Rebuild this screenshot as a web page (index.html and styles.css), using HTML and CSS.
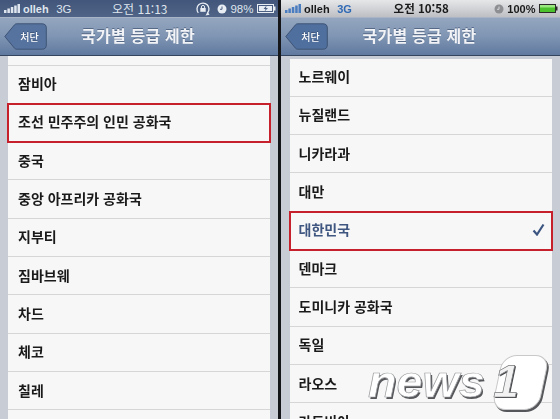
FILE: index.html
```html
<!DOCTYPE html>
<html lang="ko">
<head>
<meta charset="utf-8">
<title>국가별 등급 제한</title>
<link rel="stylesheet" href="styles.css">
</head>
<body>
<div class="screen">
  <section class="phone phone-left">
    <header class="status status-dark">
      <div class="status-side">
        <svg class="bars" width="16" height="9" viewBox="0 0 16 9"><rect x="0" y="6" width="2.500" height="3"/><rect x="3.400" y="4.500" width="2.500" height="4.500"/><rect x="6.800" y="3" width="2.500" height="6"/><rect x="10.200" y="1.500" width="2.500" height="7.500"/><rect x="13.500" y="0" width="2.500" height="9"/></svg>
        <span class="carrier">olleh</span><span class="net">3G</span>
      </div>
      <div class="clock">오전 11:13</div>
      <div class="status-side status-end">
        <svg class="rotation" width="16" height="14" viewBox="0 0 16 14"><path d="M3.300 10.800a6 6 0 1 1 9.200.2" fill="none" stroke="#e8edf4" stroke-width="1.300"/><path d="M10.500 13.500l4-.8-1.800-3z" fill="#e8edf4"/><rect x="5.300" y="6" width="5.400" height="3.800" fill="#e8edf4"/><path d="M6.400 6v-1a1.600 1.600 0 0 1 3.200 0v1" fill="none" stroke="#e8edf4"/></svg>
        <svg class="alarm" width="10" height="10" viewBox="0 0 10 10"><circle cx="5" cy="5" r="4.500" fill="#e8edf4"/><path d="M5 2.500v2.800h-2" fill="none" stroke="#4d6282"/></svg>
        <span class="pct">98%</span>
        <svg width="19" height="9" viewBox="0 0 19 9"><rect x=".5" y=".5" width="16" height="8" fill="none" stroke="#e8edf4"/><rect x="17" y="2.500" width="1.500" height="4" fill="#e8edf4"/><rect x="2" y="2" width="13" height="5" fill="#e8edf4"/><path d="M9.500 1.500l-3 3.500h2l-1 2.500 3.500-3.500h-2z" fill="#4d6282"/></svg>
      </div>
    </header>
    <nav class="nav">
      <div class="back">
        <svg class="back-shape" width="43" height="27" viewBox="0 0 43 27"><path d="M.8 13.500 10.500 1.800Q11.300.8 12.800.8H38Q42.300.8 42.300 5V22Q42.300 26.200 38 26.200H12.800Q11.300 26.200 10.500 25.200Z" fill="#56739f" stroke="#3f5475"/></svg>
        <span class="back-label">처단</span>
      </div>
      <h1 class="title">국가별 등급 제한</h1>
    </nav>
    <div class="list list-left">
      <ul class="card">
        <li class="row row-stub"></li>
        <li class="row">잠비아</li>
        <li class="row mark">조선 민주주의 인민 공화국</li>
        <li class="row">중국</li>
        <li class="row">중앙 아프리카 공화국</li>
        <li class="row">지부티</li>
        <li class="row">짐바브웨</li>
        <li class="row">차드</li>
        <li class="row">체코</li>
        <li class="row">칠레</li>
        <li class="row"></li>
      </ul>
    </div>
  </section>
  <section class="phone phone-right">
    <header class="status status-light">
      <div class="status-side">
        <svg class="bars" width="16" height="9" viewBox="0 0 16 9"><rect x="0" y="6" width="2.500" height="3"/><rect x="3.400" y="4.500" width="2.500" height="4.500"/><rect x="6.800" y="3" width="2.500" height="6"/><rect x="10.200" y="1.500" width="2.500" height="7.500"/><rect x="13.500" y="0" width="2.500" height="9"/></svg>
        <span class="carrier">olleh</span><span class="net net-blue">3G</span>
      </div>
      <div class="clock">오전 10:58</div>
      <div class="status-side status-end">
        <svg class="alarm" width="10" height="10" viewBox="0 0 10 10"><circle cx="5" cy="5" r="4.500" fill="#8d8f93"/><path d="M5 2.500v2.800h-2" fill="none" stroke="#d5d7da"/></svg>
        <span class="pct">100%</span>
        <svg width="19" height="9" viewBox="0 0 19 9"><rect x=".5" y=".5" width="16" height="8" fill="#4cc22e" stroke="#2b2b2b"/><rect x="17" y="2.500" width="1.500" height="4" fill="#2b2b2b"/><rect x="1" y="1" width="15" height="2.500" fill="#9ae87f"/></svg>
      </div>
    </header>
    <nav class="nav">
      <div class="back">
        <svg class="back-shape" width="43" height="27" viewBox="0 0 43 27"><path d="M.8 13.500 10.500 1.800Q11.300.8 12.800.8H38Q42.300.8 42.300 5V22Q42.300 26.200 38 26.200H12.800Q11.300 26.200 10.500 25.200Z" fill="#4f6f9e" stroke="#3f5475"/></svg>
        <span class="back-label">처단</span>
      </div>
      <h1 class="title">국가별 등급 제한</h1>
    </nav>
    <div class="list list-right">
      <ul class="card">
        <li class="row">노르웨이</li>
        <li class="row">뉴질랜드</li>
        <li class="row">니카라과</li>
        <li class="row">대만</li>
        <li class="row mark selected">대한민국
          <svg class="check" width="13" height="13" viewBox="0 0 13 13"><path d="M1.500 7.500 5 11.500 11.500 1.500" fill="none" stroke="#3b5580" stroke-width="2.200"/></svg>
        </li>
        <li class="row">덴마크</li>
        <li class="row">도미니카 공화국</li>
        <li class="row">독일</li>
        <li class="row">라오스</li>
        <li class="row">라트비아</li>
      </ul>
    </div>
  </section>
  <div class="logo"><span class="logo-news">news</span><span class="logo-one">1</span></div>
</div>
</body>
</html>
```

FILE: styles.css
```css
* { box-sizing: border-box; margin: 0; padding: 0; }
html, body { width: 560px; height: 419px; overflow: hidden; background: #14161a; }
body { font-family: "Liberation Sans", "Noto Sans CJK KR", sans-serif; }
.screen { position: relative; display: flex; width: 560px; height: 419px; justify-content: space-between; filter: blur(.3px); }
.phone { display: flex; flex-direction: column; height: 419px; overflow: hidden; }
.phone-left { width: 278px; }
.phone-right { width: 279px; }
.status { display: grid; grid-template-columns: 1fr auto 1fr; align-items: center; height: 17px; padding: 0 2px 0 3.500px; font-size: 11px; }
.status-dark { background: linear-gradient(#41567a, #4f6486); color: #dfe5ee; }
.status-light { background: linear-gradient(#e6e7e9, #bdbfc3); color: #1a1a1a; }
.status-side { display: flex; align-items: center; gap: 3.500px; }
.status-end { justify-content: flex-end; }
.bars { fill: #dfe5ee; }
.status-light .bars { fill: #4a7cc0; }
.carrier { font-weight: 700; font-size: 11px; }
.net { margin-left: 4px; font-size: 11.500px; }
.net-blue { color: #2f69b5; font-weight: 700; font-size: 11px; }
.clock { font-family: "Noto Sans CJK KR", sans-serif; font-size: 12px; line-height: 17px; }
.status-light .clock { font-weight: 700; font-size: 11.500px; }
.pct { font-size: 11.500px; }
.status-light .pct { font-weight: 700; font-size: 11px; }
.rotation { margin-right: 2px; }
.nav { position: relative; display: flex; align-items: center; height: 39px; padding-left: 4px; background: linear-gradient(#94a6bf, #7f95b3 50%, #60799f); border-top: 1px solid #a9b5c6; border-bottom: 1px solid #34445e; }
.back { position: relative; display: flex; align-items: center; justify-content: center; width: 43px; height: 27px; padding-left: 8px; }
.back-shape { position: absolute; inset: 0; }
.back-label { position: relative; font-family: "Noto Sans CJK KR", sans-serif; font-size: 10px; font-weight: 500; color: #fff; text-shadow: 0 -1px 0 #3f5475; }
.title { position: absolute; left: 0; right: 2px; top: 5px; text-align: center; font-family: "Noto Sans CJK KR", sans-serif; font-size: 16px; line-height: 24px; font-weight: 700; letter-spacing: .2px; color: #f1f3f6; text-shadow: 0 -1px 0 #566a88; }
.list { flex: 1; overflow: hidden; background: #c8ccd4; }
.list-left { padding: 0 8px; }
.list-right { padding: 2.500px 8px 0 9px; }
.card { list-style: none; background: #f7f7f7; }
.row { position: relative; display: flex; align-items: center; justify-content: space-between; height: 38.300px; padding: 0 10px 2px; border-bottom: 1px solid #d6d6d6; font-family: "Noto Sans CJK KR", sans-serif; font-size: 14px; font-weight: 700; color: #1a1a1a; }
.list-right .row { padding-left: 8.500px; }
.row-stub { height: 9.500px; }
.mark { outline: 2.500px solid #c6202c; outline-offset: -1.500px; }
.list-right .selected { color: #3e5680; padding-right: 7px; }
.check { display: block; }
.logo { position: absolute; left: 368px; top: 355px; display: flex; align-items: flex-start; }
.logo-news { display: block; width: 117px; margin-top: 5px; white-space: nowrap; font-family: "Liberation Sans", sans-serif; font-size: 44px; line-height: 44px; font-weight: 700; font-style: italic; color: #fff; -webkit-text-stroke: .7px #9a9c9f; text-shadow: 1.500px 1.500px 0 #55575a; transform: scaleX(1.060); transform-origin: left center; }
.logo-one { display: block; width: 47px; height: 55px; margin-left: 12px; transform: skewX(-12deg); background: #fff; border: 1px solid #c9c9c9; border-radius: 14px; box-shadow: 2px 2px 0 #55575a; font-family: "Liberation Sans", sans-serif; font-size: 46px; line-height: 50px; font-weight: 700; text-indent: -4px; color: #f2f2f2; -webkit-text-stroke: .7px #77797c; text-shadow: 1.500px 1px 0 #45474a; }
```
